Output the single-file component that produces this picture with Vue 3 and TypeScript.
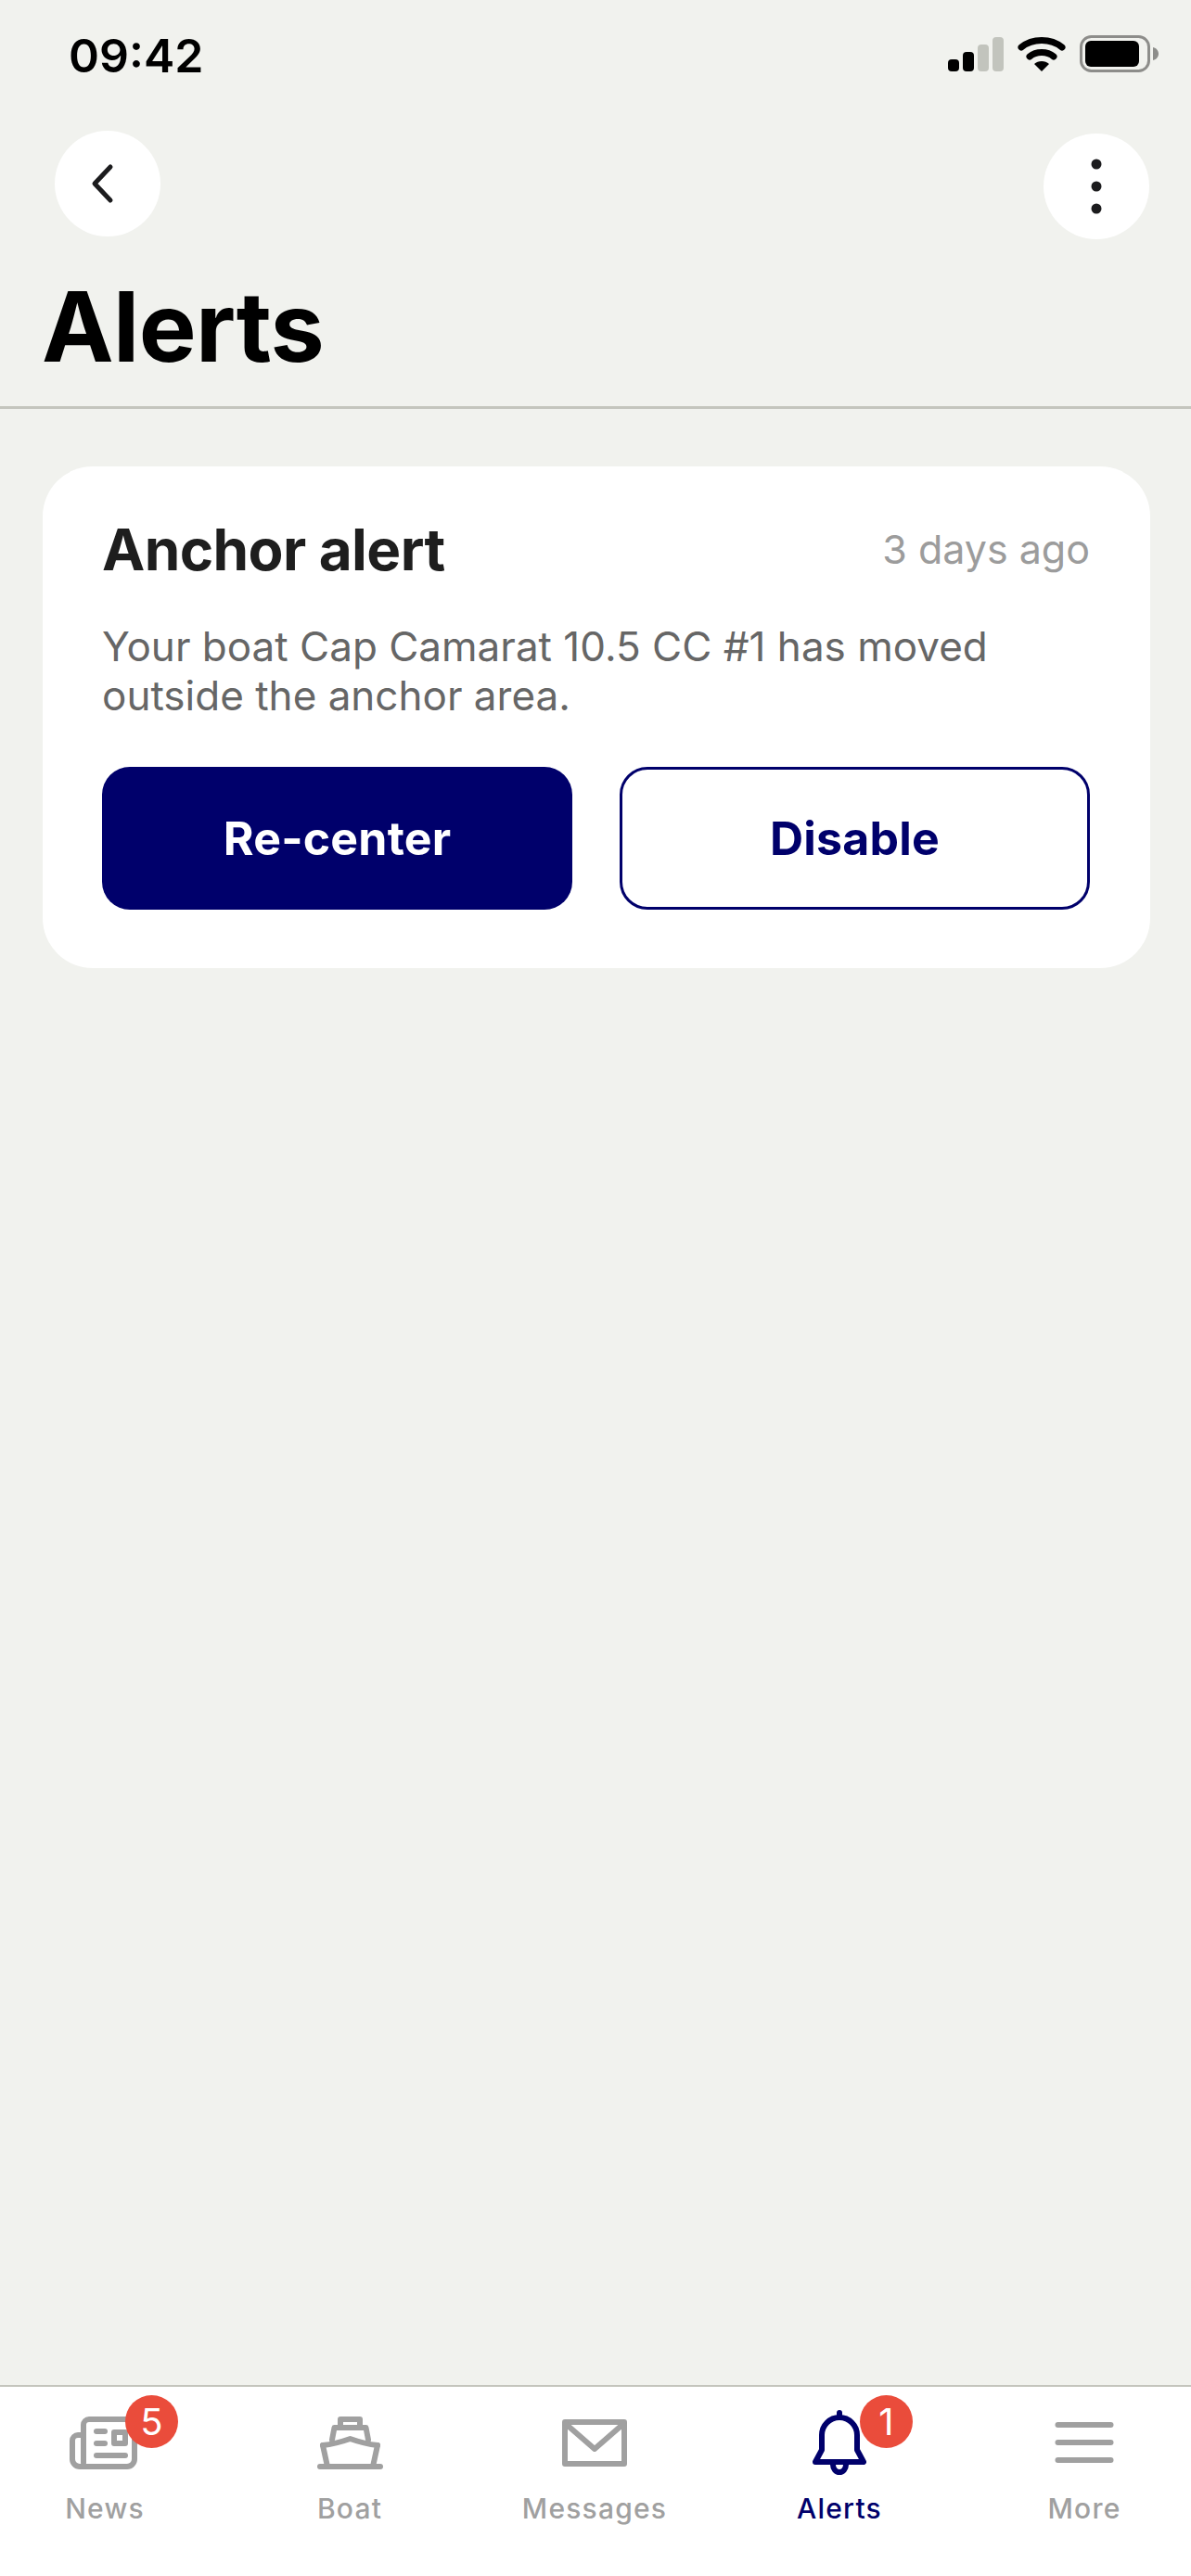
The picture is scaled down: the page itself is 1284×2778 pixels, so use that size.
<template>
  <div class="page">
    <div class="status">
      <span class="time">09:42</span>
      <div class="status-icons">
        <svg width="60" height="38" viewBox="0 0 60 38" class="signal">
          <rect x="0" y="24" width="12" height="13" rx="4" fill="#000" />
          <rect x="16" y="16" width="12" height="21" rx="4" fill="#000" />
          <rect x="32" y="8" width="12" height="29" rx="4" fill="#c2c4bd" />
          <rect x="48" y="0" width="12" height="37" rx="4" fill="#c2c4bd" />
        </svg>
        <svg width="52" height="40" viewBox="0 0 52 40" class="wifi">
          <path d="M4 13 C16 3 36 3 48 13" fill="none" stroke="#000" stroke-width="7" stroke-linecap="round" />
          <path d="M13 23 C20 17 32 17 39 23" fill="none" stroke="#000" stroke-width="7" stroke-linecap="round" />
          <path d="M18 31 C22 27 30 27 34 31 L26 39 Z" fill="#000" />
        </svg>
        <svg width="85" height="40" viewBox="0 0 85 40">
          <rect x="1.5" y="1.5" width="73" height="37" rx="11" fill="none" stroke="#8d8d8a" stroke-width="3" />
          <rect x="6" y="6" width="58" height="28" rx="6" fill="#000" />
          <path d="M79 13 C83 14 85 17 85 20 C85 23 83 26 79 27 Z" fill="#8d8d8a" />
        </svg>
      </div>
    </div>

    <div class="nav">
      <button class="round">
        <svg width="30" height="44" viewBox="0 0 30 44">
          <path d="M24 4 L7 22 L24 40" fill="none" stroke="#1c1c1e" stroke-width="5" stroke-linecap="round" stroke-linejoin="round" />
        </svg>
      </button>
      <button class="round menu">
        <svg width="12" height="60" viewBox="0 0 12 60">
          <circle cx="6" cy="6" r="5.5" fill="#1c1c1e" />
          <circle cx="6" cy="30" r="5.5" fill="#1c1c1e" />
          <circle cx="6" cy="54" r="5.5" fill="#1c1c1e" />
        </svg>
      </button>
    </div>

    <h1 class="title">Alerts</h1>

    <main class="content">
      <section class="card">
        <div class="card-head">
          <h2>Anchor alert</h2>
          <span class="ago">3 days ago</span>
        </div>
        <p class="body">Your boat Cap Camarat 10.5 CC #1 has moved<br />outside the anchor area.</p>
        <div class="actions">
          <button class="btn primary">Re-center</button>
          <button class="btn outline">Disable</button>
        </div>
      </section>
    </main>

    <nav class="tabs">
      <div v-for="tab in tabs" :key="tab.label" :class="['tab', { active: tab.active }]">
        <div class="tab-icon">
          <svg :width="tab.w" :height="tab.h" :viewBox="`0 0 ${tab.w} ${tab.h}`" fill="none" stroke="currentColor" stroke-width="6" stroke-linecap="round" stroke-linejoin="round">
            <path v-for="d in tab.paths" :key="d" :d="d" />
          </svg>
          <span v-if="tab.badge" class="badge">{{ tab.badge }}</span>
        </div>
        <span class="tab-label">{{ tab.label }}</span>
      </div>
    </nav>
  </div>
</template>

<script setup lang="ts">
interface Tab {
  label: string;
  w: number;
  h: number;
  paths: string[];
  badge?: number;
  active?: boolean;
}

const tabs: Tab[] = [
  {
    label: "News",
    w: 76,
    h: 57,
    badge: 5,
    paths: [
      "M15 50 V9 a6 6 0 0 1 6 -6 H64 a6 6 0 0 1 6 6 V46 a8 8 0 0 1 -8 8 H11 a8 8 0 0 1 -8 -8 V26 a6 6 0 0 1 6 -6 h6",
      "M29 16 H38",
      "M29 29 H38",
      "M29 42 H60",
      "M48 17 H60 V29 H48 Z",
    ],
  },
  {
    label: "Boat",
    w: 71,
    h: 57,
    paths: [
      "M25 12 V3 H46 V12 Z",
      "M16 25 L18.5 12 H52.5 L55 25",
      "M6 31 C16 30 27 27 35.5 24 C44 27 55 30 65 31",
      "M6 31 L11 54",
      "M65 31 L60 54",
      "M3 54 H68",
    ],
  },
  {
    label: "Messages",
    w: 70,
    h: 51,
    paths: ["M3 3 H67 V48 H3 Z", "M4 5 L35 32 L66 5"],
  },
  {
    label: "Alerts",
    w: 58,
    h: 70,
    badge: 1,
    active: true,
    paths: [
      "M29 3 V8",
      "M10 43 V27 a19 19 0 0 1 38 0 V43 L55 56 H3 Z",
      "M22 59 a7 8 0 0 0 14 0",
    ],
  },
  {
    label: "More",
    w: 64,
    h: 46,
    paths: ["M3.5 4 H60.5", "M3.5 23 H60.5", "M3.5 42 H60.5"],
  },
];
</script>

<style scoped>
.page {
  width: 1284px;
  height: 2778px;
  display: flex;
  flex-direction: column;
  background: #f1f2ee;
  font-family: Inter, "Liberation Sans", sans-serif;
  overflow: hidden;
}

.status {
  height: 141px;
  display: flex;
  justify-content: space-between;
  align-items: flex-start;
  padding: 38px 35px 0 74px;
  box-sizing: border-box;
}

.time {
  font-size: 50px;
  line-height: 44px;
  font-weight: 600;
  color: #000;
}

.status-icons {
  display: flex;
  align-items: flex-start;
  gap: 15px;
}

.signal {
  margin-top: 2px;
}

.nav {
  display: flex;
  justify-content: space-between;
  align-items: flex-start;
  padding: 0 45px 0 59px;
}

.round {
  width: 114px;
  height: 114px;
  border: none;
  border-radius: 50%;
  background: #fff;
  display: flex;
  align-items: center;
  justify-content: center;
  padding: 0;
}

.round svg {
  margin-right: 12px;
}

.menu {
  margin-top: 3px;
}

.menu svg {
  margin-right: 0;
}

.title {
  margin: 42px 0 0;
  padding: 0 45px 34px;
  font-size: 104px;
  line-height: 104px;
  font-weight: 700;
  letter-spacing: -0.6px;
  color: #000;
  border-bottom: 3px solid #c4c5bd;
}

.content {
  flex: 1;
  padding: 62px 44px 0 46px;
}

.card {
  height: 541px;
  box-sizing: border-box;
  padding: 54px 65px 0 64px;
  background: #fff;
  border-radius: 54px;
}

.card-head {
  display: flex;
  justify-content: space-between;
  align-items: flex-start;
}

.card-head h2 {
  margin: 0;
  font-size: 62px;
  line-height: 72px;
  font-weight: 700;
  color: #1e1e1e;
  letter-spacing: -0.6px;
}

.ago {
  font-size: 43px;
  line-height: 70px;
  color: #9c9c9c;
}

.body {
  margin: 42px 0 0;
  font-size: 44px;
  line-height: 53px;
  color: #666;
}

.actions {
  display: grid;
  grid-template-columns: 1fr 1fr;
  gap: 51px;
  margin-top: 50px;
}

.btn {
  height: 154px;
  box-sizing: border-box;
  padding: 0;
  border-radius: 30px;
  font-family: inherit;
  font-size: 50px;
  font-weight: 700;
  letter-spacing: 0.2px;
}

.primary {
  background: #00006b;
  border: none;
  color: #fff;
}

.outline {
  background: #fff;
  border: 3px solid #00006b;
  color: #00006b;
}

.tabs {
  height: 206px;
  box-sizing: border-box;
  display: flex;
  justify-content: space-between;
  padding: 25px 15px 0 13px;
  background: #fff;
  border-top: 2px solid #c4c5bd;
}

.tab {
  width: 200px;
  display: flex;
  flex-direction: column;
  align-items: center;
  color: #a0a0a0;
}

.tab.active {
  color: #00006b;
}

.tab-icon {
  position: relative;
  width: 100%;
  height: 70px;
  display: flex;
  align-items: center;
  justify-content: center;
}

.badge {
  position: absolute;
  top: -16px;
  left: calc(50% + 22px);
  width: 57px;
  height: 57px;
  border-radius: 50%;
  background: #ea4c3b;
  color: #fff;
  font-size: 40px;
  line-height: 57px;
  text-align: center;
}

.tab-label {
  margin-top: 18px;
  font-size: 30px;
  line-height: 36px;
  font-weight: 500;
  letter-spacing: 1.2px;
}
</style>
